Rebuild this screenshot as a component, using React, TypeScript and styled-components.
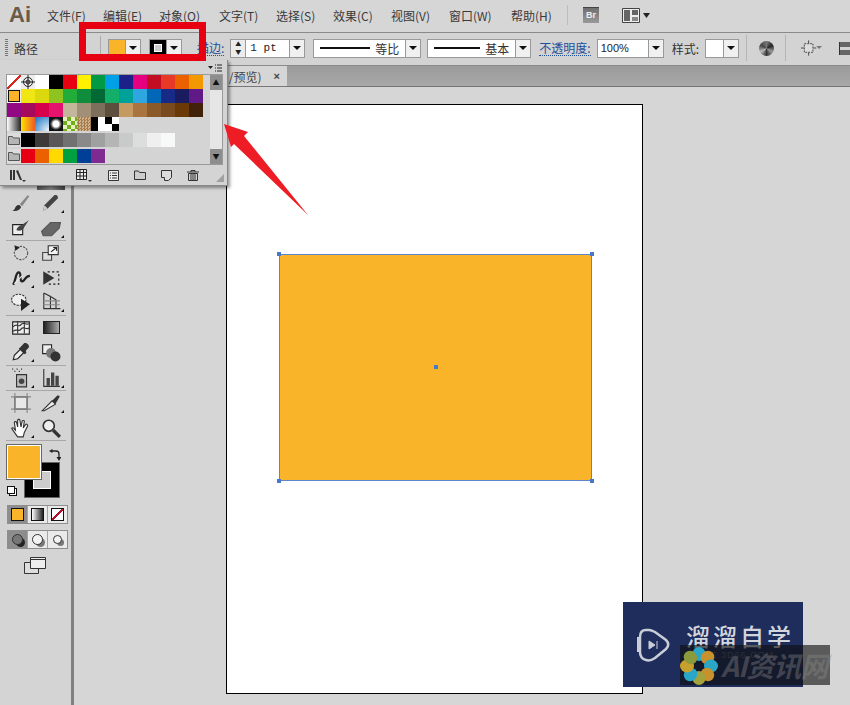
import React from 'react';
import styled, {createGlobalStyle} from 'styled-components';

const GlobalStyle = createGlobalStyle`
  html, body {
    margin: 0;
    padding: 0;
    background: #d6d6d6;
  }
  body {
    font-family: "Noto Sans CJK SC", "Liberation Sans", sans-serif;
    color: #3a3a3a;
    overflow: hidden;
  }
`;

const MENU_ITEMS = [
  {label: '文件(F)', width: 56},
  {label: '编辑(E)', width: 56},
  {label: '对象(O)', width: 60},
  {label: '文字(T)', width: 57},
  {label: '选择(S)', width: 57},
  {label: '效果(C)', width: 58},
  {label: '视图(V)', width: 58},
  {label: '窗口(W)', width: 62},
  {label: '帮助(H)', width: 42},
];

const ROW_ONE = ['#e60012', '#fff100', '#009944', '#00a0e9', '#1d2088', '#e4007f', '#c30d23', '#e83828', '#eb6100', '#f39800'];
const ROW_TWO = ['#f0e614', '#dcd80e', '#8fc31f', '#22ac38', '#0f8c3c', '#006934', '#13ae67', '#00a199', '#2ea7e0', '#0068b7', '#172a88', '#1b1c60', '#601986'];
const ROW_THREE = ['#920783', '#a40b5d', '#d7004a', '#e4146e', '#c4b69a', '#a18f78', '#7c6f5c', '#5d4e3e', '#c49a60', '#a9743f', '#8b5a2b', '#784a1e', '#6a3906', '#42210b'];
const ROW_FOUR = [
  'linear-gradient(90deg,#fff,#222)',
  'linear-gradient(90deg,#ffe100,#ee5a24)',
  'radial-gradient(circle at 100% 100%,#f4f8fc,#2a7fc8 90%)',
  'radial-gradient(circle,#fff 0 3px,#999 4px,#111 6px)',
  'repeating-conic-gradient(#74ad1c 0 25%,#e4f0c0 0 50%) 0 0/8px 8px',
  'repeating-conic-gradient(#a97c50 0 25%,#cdb48c 0 50%) 0 0/3px 3px',
  'linear-gradient(90deg,#000 0 50%,#fff 50%)',
  'repeating-conic-gradient(#fff 0 25%,#000 0 50%) 0 0/14px 14px',
];
const ROW_FIVE = ['#000000', '#3e3a39', '#595757', '#727171', '#898989', '#9fa0a0', '#b5b5b6', '#c9caca', '#dcdddd', '#efefef', '#f7f8f8'];
const ROW_SIX = ['#e60012', '#eb6100', '#ffd900', '#00a040', '#003f98', '#7f2a90'];

const PETALS = ['#2aa6c8', '#c8912c', '#2aa6c8', '#c8912c', '#a4a23c', '#2aa6c8', '#c8a02c', '#8a9a3c'];

const Folder = () => (
  <svg width="12" height="10" viewBox="0 0 12 10">
    <path d="M.5 9.500V1.500h4l1 1.500h6v6.500z" fill="#b5b5b5" stroke="#555" />
  </svg>
);

const TOOLS: {icon: React.ReactNode; corner?: boolean}[][] = [
  [
    {icon: <><path d="M1 16c3 0 2-4 5-5 2-1 3 1 3 2-1 2-4 4-8 3z" fill="#333" /><path d="M8 10l7-8 1.500 1L10 12z" fill="#888" /></>},
    {corner: true, icon: <><path d="M2 16l1-5 9-9c2-1 4 1 3 3l-9 9z" fill="#444" /><path d="M2 16l1-5 3 3z" fill="#ccc" /></>},
  ],
  [
    {icon: <><path d="M1.500 6h9v9h-9z" fill="#eee" stroke="#222" /><path d="M5 11c0-3 3-4 5-5l6-4-4 6c-1 3-4 4-7 3z" fill="#444" /></>},
    {corner: true, icon: <path d="M.5 12l8-8h9l-1 5-7 7H2z" fill="#666" stroke="#555" />},
  ],
  [
    {corner: true, icon: <><circle cx="9" cy="9" r="6" fill="none" stroke="#555" strokeDasharray="2 1" /><path d="M3 2l5 2-4 3z" fill="#222" /></>},
    {corner: true, icon: <><path d="M1.500 8.500h8v7h-8z" fill="#ddd" stroke="#444" /><path d="M6.500 2.500h9v8h-9z" fill="#f4f4f4" stroke="#333" /><path d="M9 8l5-4M11 4h3v3" fill="none" stroke="#222" /></>},
  ],
  [
    {corner: true, icon: <><path d="M2 15c3-6 2-11 5-11 3 0 0 8 3 8s2-5 7-5" fill="none" stroke="#222" strokeWidth="2" /><path d="M3 14l7-7" stroke="#eee" /></>},
    {icon: <><path d="M2 3l10 6-10 6z" fill="#333" /><path d="M6 3.500h10v11H6" fill="none" stroke="#222" strokeDasharray="2 2" /></>},
  ],
  [
    {corner: true, icon: <><ellipse cx="7" cy="7" rx="6.500" ry="5" fill="#eee" stroke="#333" strokeDasharray="2 1" /><path d="M9 6l8 5-8 6z" fill="#222" /></>},
    {corner: true, icon: <><path d="M2.500 1v14h15M2.500 1l6 3v11M8.500 4l5 3v8" fill="none" stroke="#333" /><path d="M2 8h15M2 11.500h15" stroke="#888" /></>},
  ],
  [
    {icon: <><path d="M1.500 3.500h15v11h-15z" fill="#eee" stroke="#222" /><path d="M2 8c3-4 5 1 7-2s5 1 7-1M2 12c3-3 5 1 7-2s5 1 7-1M6 3v11M12 3v11" fill="none" stroke="#333" /></>},
    {icon: <defs />},
  ],
  [
    {corner: true, icon: <><path d="M2 16l1-4 7-7 3 3-7 7z" fill="#eee" stroke="#222" /><path d="M9 4l3-3c2-1 5 2 4 4l-3 3 1 2-2 1-5-5z" fill="#333" /></>},
    {icon: <><path d="M1.500 2.500h8v8h-8z" fill="#eee" stroke="#222" /><circle cx="9" cy="10" r="4.500" fill="#777" /><circle cx="13" cy="13" r="4.500" fill="#333" /></>},
  ],
  [
    {corner: true, icon: <><path d="M5 6h9v11H5z" fill="#bbb" stroke="#333" /><circle cx="9.500" cy="12" r="2.500" fill="#444" /><path d="M1 1h2M5 1h2M9 1h2M3 3h2M7 3h2" stroke="#333" strokeDasharray="1 1" /></>},
    {corner: true, icon: <><path d="M2.500 1v15.500H17" fill="none" stroke="#333" /><path d="M5 9h3v7H5zM9 4h3v12H9zM13 7h3v9h-3z" fill="#444" /></>},
  ],
  [
    {icon: <><path d="M3.500 3.500h11v11h-11z" fill="#e8e8e8" stroke="#444" /><path d="M0 3.500h18M0 14.500h18M3.500 0v18M14.500 0v18" stroke="#888" /></>},
    {corner: true, icon: <><path d="M1 16l9-9 3 3-10 6z" fill="#eee" stroke="#333" /><path d="M10 7l5-5 2 1-4 7z" fill="#333" /></>},
  ],
  [
    {corner: true, icon: <path d="M6 17L1 10c-1-1 1-2 2 0l1 1-1-7c0-1 2-1 2 0l1 4V2c0-1 2-1 2 0l1 6 1-5c0-1 2-1 2 0l-1 6 2-3c1-1 2 0 2 1l-3 6-1 4z" fill="#fff" stroke="#333" />},
    {icon: <><circle cx="7" cy="7" r="5" fill="#eee" stroke="#333" strokeWidth="1.500" /><path d="M11 11l6 6" stroke="#333" strokeWidth="3" /></>},
  ],
];

const GROUP_ENDS = [1, 4, 6, 7, 9];

export default function App(): JSX.Element {
  return (
    <Page>
      <GlobalStyle />
      <MenuBar>
        <Logo>Ai</Logo>
        <MenuList>
          {MENU_ITEMS.map((item) => (
            <MenuItem key={item.label} $width={item.width}>{item.label}</MenuItem>
          ))}
        </MenuList>
        <MenuDivider />
        <BridgeBadge>Br</BridgeBadge>
        <svg width="28" height="15" viewBox="0 0 28 15">
          <path d="M.5.5h17v14H.5z" fill="#eee" stroke="#444" />
          <path d="M2 2h6v11H2zM10 2h6v5h-6z" fill="#666" />
          <path d="M10 9h6v4h-6z" fill="#888" />
          <path d="M21 5h7l-3.500 5z" fill="#222" />
        </svg>
      </MenuBar>

      <ControlBar>
        <Grip />
        <ControlLabel>路径</ControlLabel>
        <ControlDivider />
        <SwatchPicker>
          <SwatchFace $fill="#f9b42a" />
          <Caret />
        </SwatchPicker>
        <SwatchPicker>
          <StrokeFace />
          <Caret />
        </SwatchPicker>
        <LinkLabel $left={15}>描边:</LinkLabel>
        <Spinner>
          <SpinnerArrows><span>▲</span><span>▼</span></SpinnerArrows>
          <MonoValue>1 pt</MonoValue>
          <Caret />
        </Spinner>
        <LineSelect $width={108} $after={6}>
          <LineSample $width={50} />
          <LineName>等比</LineName>
          <Caret />
        </LineSelect>
        <LineSelect $width={104} $after={0}>
          <LineSample $width={46} />
          <LineName>基本</LineName>
          <Caret />
        </LineSelect>
        <LinkLabel $left={8}>不透明度:</LinkLabel>
        <PercentSelect>
          <PercentValue>100%</PercentValue>
          <Caret />
        </PercentSelect>
        <PlainLabel>样式:</PlainLabel>
        <StyleSelect>
          <StyleFace />
          <Caret />
        </StyleSelect>
        <ThinDivider $after={12} />
        <RecolorIcon />
        <ThinDivider $after={15} />
        <svg width="22" height="16" viewBox="0 0 22 16">
          <path d="M3.500 3.500h9v9h-9z" fill="#ddd" stroke="#444" strokeDasharray="2 1" />
          <path d="M8 0v3M8 13v3M0 8h3M13 8h3" stroke="#444" />
          <path d="M16 6h6l-3 3z" fill="#777" />
        </svg>
        <AlignIcon />
      </ControlBar>

      <Workspace>
        <ToolPanel>
          <ToolTop><ToolStub /></ToolTop>
          {TOOLS.map((row, index) => (
            <ToolRowGroup key={index} $divided={GROUP_ENDS.includes(index)}>
              {row.map((tool, toolIndex) => (
                <ToolButton key={toolIndex} $corner={tool.corner}>
                  {index === 5 && toolIndex === 1 ? (
                    <GradientTool />
                  ) : (
                    <svg width="20" height="20" viewBox="0 0 18 18">{tool.icon}</svg>
                  )}
                </ToolButton>
              ))}
            </ToolRowGroup>
          ))}
          <ColorWell>
            <StrokeWell><StrokeHole /></StrokeWell>
            <FillWell />
            <SwapIcon width="12" height="12" viewBox="0 0 12 12">
              <path d="M3 2h4c2 0 3 1 3 3v3" fill="none" stroke="#222" strokeWidth="1.300" />
              <path d="M0 2l3.500-2v4zM10 12L7.500 8h5z" fill="#222" />
            </SwapIcon>
            <DefaultIcon><i /><b /></DefaultIcon>
          </ColorWell>
          <ModeRow>
            <ModeButton $active><ModeFill /></ModeButton>
            <ModeButton><ModeGradient /></ModeButton>
            <ModeButton><ModeNone /></ModeButton>
          </ModeRow>
          <ModeRow>
            <ModeButton $active><DrawMode $dark /></ModeButton>
            <ModeButton><DrawMode /></ModeButton>
            <ModeButton><DrawMode $small /></ModeButton>
          </ModeRow>
          <ScreenMode width="22" height="17" viewBox="0 0 22 17">
            <path d="M.5 5.500h14v11H.5z" fill="#ddd" stroke="#333" />
            <path d="M6.500.5h15v11h-15z" fill="#eee" stroke="#333" />
            <path d="M6.500 2.500h15" stroke="#333" />
          </ScreenMode>
        </ToolPanel>

        <DocumentArea>
          <TabStrip>
            <DocTab>
              <span>/预览)</span>
              <TabClose>×</TabClose>
            </DocTab>
          </TabStrip>
          <Canvas>
            <Artboard>
              <OrangeRect>
                <Handle $x="left" $y="top" />
                <Handle $x="right" $y="top" />
                <Handle $x="left" $y="bottom" />
                <Handle $x="right" $y="bottom" />
                <CenterDot />
              </OrangeRect>
            </Artboard>
          </Canvas>
        </DocumentArea>
      </Workspace>

      <SwatchPanel>
        <PanelMenu>
          <svg width="14" height="8" viewBox="0 0 14 8">
            <path d="M0 2h5L2.500 5zM7 .5h1v1H7zM7 3.500h1v1H7zM7 6.500h1v1H7zM9 .5h5v1H9zM9 3.500h5v1H9zM9 6.500h5v1H9z" fill="#222" />
          </svg>
        </PanelMenu>
        <SwatchBody>
          <SwatchGrid>
            <SwatchRow>
              <NoneSwatch />
              <RegisterSwatch>
                <svg width="14" height="14" viewBox="0 0 14 14">
                  <circle cx="7" cy="7" r="4.500" fill="none" stroke="#222" />
                  <circle cx="7" cy="7" r="2" fill="none" stroke="#222" />
                  <path d="M7 0v14M0 7h14" stroke="#222" />
                </svg>
              </RegisterSwatch>
              <Swatch $bg="#fff" />
              <Swatch $bg="#000" />
              {ROW_ONE.map((c) => <Swatch key={c} $bg={c} />)}
            </SwatchRow>
            <SwatchRow>
              <SelectedSwatch><i /></SelectedSwatch>
              {ROW_TWO.map((c) => <Swatch key={c} $bg={c} />)}
            </SwatchRow>
            <SwatchRow>
              {ROW_THREE.map((c) => <Swatch key={c} $bg={c} />)}
            </SwatchRow>
            <SwatchRow>
              {ROW_FOUR.map((c) => <Swatch key={c} $bg={c} />)}
            </SwatchRow>
            <SwatchRow $gap>
              <FolderCell><Folder /></FolderCell>
              {ROW_FIVE.map((c) => <Swatch key={c} $bg={c} />)}
            </SwatchRow>
            <SwatchRow $gap>
              <FolderCell><Folder /></FolderCell>
              {ROW_SIX.map((c) => <Swatch key={c} $bg={c} />)}
            </SwatchRow>
          </SwatchGrid>
          <ScrollTrack>
            <ScrollButton>▲</ScrollButton>
            <ScrollThumb />
            <ScrollButton>▼</ScrollButton>
          </ScrollTrack>
        </SwatchBody>
        <PanelFooter>
          <svg width="17" height="13" viewBox="0 0 17 13">
            <path d="M1 1h2v10H1zM4 1h2v10H4zM7 2l2-1 4 10h-2z" fill="#333" />
            <path d="M13 11h4l-2 2z" fill="#333" />
          </svg>
          <FooterRight>
            <svg width="17" height="13" viewBox="0 0 17 13">
              <path d="M.5.5h10v10H.5zM.5 3.500h10M.5 7h10M4 .5v10M7.500.5v10" fill="#eee" stroke="#222" />
              <path d="M12 11h4l-2 2z" fill="#333" />
            </svg>
            <svg width="11" height="11" viewBox="0 0 11 11">
              <path d="M.5.5h10v10H.5z" fill="#eee" stroke="#333" />
              <path d="M2 3h1M4 3h5M2 5.500h1M4 5.500h5M2 8h1M4 8h5" stroke="#333" />
            </svg>
            <svg width="12" height="10" viewBox="0 0 12 10">
              <path d="M.5 9.500V1h4l1 1.500h6v7z" fill="#ccc" stroke="#333" />
            </svg>
            <svg width="11" height="11" viewBox="0 0 11 11">
              <path d="M.5.5h10v7l-3 3h-4v-3h-3z" fill="#ddd" stroke="#333" />
            </svg>
            <svg width="12" height="11" viewBox="0 0 12 11">
              <path d="M0 2h12M4 2V.5h4V2M1.500 3.500h9v7h-9zM4 4v6M6 4v6M8 4v6" fill="none" stroke="#333" />
            </svg>
          </FooterRight>
        </PanelFooter>
        <ResizeGrip />
      </SwatchPanel>

      <RedFrame />

      <ArrowMark width="90" height="100" viewBox="0 0 90 100">
        <path d="M2 4l24 8-4 4 64 79L12 24l-3 3z" fill="#ee1c25" />
      </ArrowMark>

      <Watermark>
        <svg width="36" height="38" viewBox="0 0 36 38">
          <path d="M9 4h3c2 0 4 1 6 2l11 8c3 3 3 6 0 9l-11 9c-3 2-6 3-9 2-4-1-6-4-6-8V11c0-4 2-7 6-7z M1 11v15" fill="none" stroke="#c9cdd8" strokeWidth="2.500" />
          <path d="M12 15l6 4-6 4zM20 15v8" fill="#c9cdd8" stroke="#c9cdd8" />
        </svg>
        <WatermarkText>
          <WatermarkTitle>溜溜自学</WatermarkTitle>
          <WatermarkUrl>ZIXUE.3D66.COM</WatermarkUrl>
        </WatermarkText>
      </Watermark>
      <AiStamp>
        <svg width="40" height="40" viewBox="0 0 40 40">
          <g transform="translate(19 21)">
            {PETALS.map((fill, i) => (
              <ellipse key={i} cx="0" cy="-12" rx="6.500" ry="7" fill={fill} transform={`rotate(${i * 45})`} />
            ))}
          </g>
        </svg>
        <StampText>AI资讯网</StampText>
      </AiStamp>
    </Page>
  );
}

const Page = styled.div`
  position: relative;
  width: 850px;
  height: 705px;
  overflow: hidden;
  background: #d6d6d6;
`;
const MenuBar = styled.header`
  display: flex;
  align-items: center;
  height: 32px;
  padding: 0 0 2px 9px;
  box-sizing: border-box;
`;
const Logo = styled.div`
  width: 38px;
  font-family: "Liberation Sans", sans-serif;
  font-size: 22px;
  font-weight: 700;
  color: #6b5a48;
`;
const MenuList = styled.nav`
  display: flex;
`;
const MenuItem = styled.span<{$width: number}>`
  width: ${({$width}) => $width}px;
  font-size: 12px;
  white-space: nowrap;
`;
const MenuDivider = styled.div`
  width: 1px;
  height: 20px;
  margin: 0 15px 0 14px;
  background: #bdbdbd;
`;
const BridgeBadge = styled.div`
  width: 16px;
  height: 15px;
  margin-right: 23px;
  border-top: 1px solid #444;
  background: linear-gradient(#6f6f6f, #9a9a9a);
  color: #eee;
  font: 700 9px/15px "Liberation Sans", sans-serif;
  text-align: center;
`;
const ControlBar = styled.div`
  display: flex;
  align-items: center;
  height: 34px;
  padding-bottom: 2px;
  box-sizing: border-box;
  border-top: 1px solid #8a8a8a;
  border-bottom: 1px solid #8a8a8a;
  background: #d3d3d3;
  white-space: nowrap;
  overflow: hidden;
`;
const Grip = styled.div`
  flex: none;
  width: 3px;
  height: 18px;
  margin: 0 6px 0 5px;
  background: repeating-linear-gradient(#777 0 1px, #d3d3d3 1px 2px);
`;
const ControlLabel = styled.span`
  flex: none;
  width: 86px;
  font-size: 12px;
`;
const ControlDivider = styled.div`
  flex: none;
  width: 1px;
  height: 24px;
  margin-right: 7px;
  background: #aaa;
`;
const SwatchPicker = styled.div`
  display: flex;
  flex: none;
  width: 33px;
  height: 18px;
  box-sizing: border-box;
  border: 1px solid #999;
  background: #eee;

  & + & {
    margin-left: 8px;
  }
`;
const SwatchFace = styled.div<{$fill: string}>`
  width: 17px;
  background: ${({$fill}) => $fill};
`;
const StrokeFace = styled.div`
  width: 17px;
  box-sizing: border-box;
  border: 4px solid #000;
  background: #ccc;
  box-shadow: inset 0 0 0 1px #fff;
`;
const Caret = styled.div`
  flex: none;
  position: relative;
  width: 14px;
  margin-left: auto;
  border-left: 1px solid #999;
  background: #f0f0f0;

  &::after {
    content: '';
    position: absolute;
    left: 3px;
    top: 50%;
    margin-top: -2px;
    border-style: solid;
    border-width: 4px 4px 0;
    border-color: #111 transparent transparent;
  }
`;
const LinkLabel = styled.span<{$left: number}>`
  flex: none;
  margin: 0 6px 0 ${({$left}) => $left}px;
  font-size: 12px;
  color: #1f4f9a;
  border-bottom: 1px dotted #1f4f9a;
  line-height: 14px;
`;
const Spinner = styled.div`
  display: flex;
  flex: none;
  width: 75px;
  height: 19px;
  margin-right: 8px;
  box-sizing: border-box;
  border: 1px solid #999;
  background: #fff;
`;
const SpinnerArrows = styled.div`
  display: flex;
  flex-direction: column;
  width: 14px;
  border-right: 1px solid #999;
  background: #ececec;
  font-size: 6px;
  line-height: 8px;
  text-align: center;
  color: #222;
`;
const MonoValue = styled.span`
  padding-left: 4px;
  font: 11px/16px "Liberation Mono", monospace;
  color: #222;
`;
const LineSelect = styled.div<{$width: number; $after: number}>`
  display: flex;
  flex: none;
  align-items: center;
  width: ${({$width}) => $width}px;
  height: 19px;
  margin-right: ${({$after}) => $after}px;
  padding-left: 6px;
  box-sizing: border-box;
  border: 1px solid #999;
  background: #fff;

  ${Caret} {
    align-self: stretch;
  }
`;
const LineSample = styled.div<{$width: number}>`
  width: ${({$width}) => $width}px;
  height: 2px;
  margin-right: 5px;
  background: #111;
`;
const LineName = styled.span`
  font-size: 12px;
  color: #333;
`;
const PercentSelect = styled.div`
  display: flex;
  flex: none;
  width: 67px;
  height: 19px;
  box-sizing: border-box;
  border: 1px solid #999;
  background: #fff;
`;
const PercentValue = styled.span`
  padding-left: 3px;
  font: 11px/16px "Liberation Sans", sans-serif;
  color: #222;
`;
const PlainLabel = styled.span`
  flex: none;
  margin: 0 6px 0 8px;
  font-size: 12px;
  color: #333;
`;
const StyleSelect = styled.div`
  display: flex;
  flex: none;
  width: 34px;
  height: 19px;
  box-sizing: border-box;
  border: 1px solid #999;
  background: #fff;
`;
const StyleFace = styled.div`
  width: 17px;
`;
const ThinDivider = styled.div<{$after: number}>`
  flex: none;
  width: 1px;
  height: 26px;
  margin: 0 ${({$after}) => $after}px 0 7px;
  background: #b5b5b5;
`;
const RecolorIcon = styled.div`
  flex: none;
  width: 15px;
  height: 15px;
  margin-right: 4px;
  border-radius: 50%;
  background: conic-gradient(#777, #222, #999, #333, #bbb, #444, #777);
`;
const AlignIcon = styled.div`
  flex: none;
  width: 10px;
  height: 13px;
  margin-left: 17px;
  border-left: 1px solid #333;
  background: linear-gradient(#666 0 5px, transparent 5px 8px, #666 8px);
`;
const Workspace = styled.div`
  display: flex;
  height: 639px;
`;
const ToolPanel = styled.aside`
  display: flex;
  flex-direction: column;
  align-items: flex-start;
  flex: none;
  width: 74px;
  box-sizing: border-box;
  border-right: 3px solid #808080;
  background: #d4d4d4;
`;
const ToolTop = styled.div`
  display: flex;
  align-items: flex-end;
  flex: none;
  height: 125px;
  padding: 0 0 1px 37px;
  box-sizing: border-box;
`;
const ToolStub = styled.div`
  width: 28px;
  height: 6px;
  background: linear-gradient(90deg, #555, #888, #444);
`;
const ToolRowGroup = styled.div<{$divided?: boolean}>`
  display: flex;
  align-items: flex-start;
  flex: none;
  box-sizing: border-box;
  width: 60px;
  height: ${({$divided}) => ($divided ? 25.5 : 24.5)}px;
  margin-left: 6px;
  border-bottom: ${({$divided}) => ($divided ? '1px solid #a8a8a8' : '0 none')};
`;
const ToolButton = styled.div<{$corner?: boolean}>`
  position: relative;
  display: flex;
  align-items: center;
  justify-content: center;
  width: 30px;
  height: 24px;

  &::after {
    content: '';
    display: ${({$corner}) => ($corner ? 'block' : 'none')};
    position: absolute;
    right: 2px;
    bottom: 2px;
    border-style: solid;
    border-width: 0 0 3px 3px;
    border-color: transparent transparent #111;
  }
`;
const GradientTool = styled.div`
  width: 15px;
  height: 11px;
  border: 1px solid #222;
  background: linear-gradient(90deg, #222, #aaa);
`;
const ColorWell = styled.div`
  position: relative;
  flex: none;
  width: 66px;
  height: 54px;
  margin: 3px 0 7px;
`;
const FillWell = styled.div`
  position: absolute;
  left: 6px;
  top: 0;
  width: 36px;
  height: 36px;
  box-sizing: border-box;
  border: 1px solid #666;
  outline: 1px solid #fff;
  outline-offset: -2px;
  background: #f9b42a;
`;
const StrokeWell = styled.div`
  position: absolute;
  left: 24px;
  top: 18px;
  width: 36px;
  height: 36px;
  box-sizing: border-box;
  padding: 8px;
  border: 1px solid #666;
  background: #000;
`;
const StrokeHole = styled.div`
  width: 18px;
  height: 18px;
  box-sizing: border-box;
  border: 1px solid #fff;
  background: #ccc;
`;
const SwapIcon = styled.svg`
  position: absolute;
  left: 49px;
  top: 5px;
`;
const DefaultIcon = styled.div`
  position: absolute;
  left: 7px;
  top: 42px;
  width: 10px;
  height: 10px;

  i, b {
    position: absolute;
    width: 6px;
    height: 6px;
    border: 1px solid #111;
  }
  b {
    right: 0;
    bottom: 0;
    background: #fff;
  }
  i {
    z-index: 1;
    left: 0;
    top: 0;
    background: #fff;
  }
`;
const ModeRow = styled.div`
  display: flex;
  flex: none;
  width: 61px;
  height: 19px;
  margin: 0 0 6px 7px;
  box-sizing: border-box;
  border: 1px solid #8e8e8e;
  background: #e4e4e4;
`;
const ModeButton = styled.div<{$active?: boolean}>`
  display: flex;
  align-items: center;
  justify-content: center;
  flex: 1;
  background: ${({$active}) => ($active ? '#8d8d8d' : '#eaeaea')};

  & + & {
    border-left: 1px solid #a5a5a5;
  }
`;
const ModeFill = styled.div`
  width: 13px;
  height: 13px;
  box-sizing: border-box;
  border: 1px solid #111;
  background: #f9b42a;
`;
const ModeGradient = styled.div`
  width: 13px;
  height: 13px;
  box-sizing: border-box;
  border: 1px solid #111;
  background: linear-gradient(90deg, #fff, #222);
`;
const ModeNone = styled.div`
  width: 13px;
  height: 13px;
  box-sizing: border-box;
  border: 1px solid #111;
  background: linear-gradient(135deg, #fff 0 42%, #b01030 42% 58%, #fff 58%);
`;
const DrawMode = styled.div<{$dark?: boolean; $small?: boolean}>`
  width: ${({$small}) => ($small ? 7 : 9)}px;
  height: ${({$small}) => ($small ? 7 : 9)}px;
  border: 1px solid #333;
  border-radius: 50%;
  background: ${({$dark}) => ($dark ? '#777' : '#f4f4f4')};
  box-shadow: 3px 3px 0 -1px ${({$dark}) => ($dark ? '#222' : '#777')};
`;
const ScreenMode = styled.svg`
  flex: none;
  margin: 2px 0 0 24px;
`;
const DocumentArea = styled.main`
  flex: 1;
  display: flex;
  flex-direction: column;
  min-width: 0;
`;
const TabStrip = styled.div`
  display: flex;
  flex: none;
  height: 21px;
  box-sizing: border-box;
  border-bottom: 1px solid #777;
  background: linear-gradient(#9b9b9b, #a8a8a8);
`;
const DocTab = styled.div`
  display: flex;
  align-items: center;
  justify-content: flex-end;
  gap: 12px;
  width: 213px;
  padding-right: 7px;
  box-sizing: border-box;
  background: #d6d6d6;
  font-size: 12px;
  color: #444;
`;
const TabClose = styled.span`
  font: 700 11px "Liberation Sans", sans-serif;
`;
const Canvas = styled.div`
  flex: 1;
  padding: 17px 0 0 152px;
  background: #d6d6d6;
`;
const Artboard = styled.section`
  position: relative;
  width: 417px;
  height: 590px;
  box-sizing: border-box;
  border: 1px solid #000;
  background: #fff;
`;
const OrangeRect = styled.div`
  position: absolute;
  left: 52px;
  top: 149px;
  width: 313px;
  height: 227px;
  box-sizing: border-box;
  border: 1px solid #5f86c8;
  background: #f9b42a;
`;
const Handle = styled.span<{$x: 'left' | 'right'; $y: 'top' | 'bottom'}>`
  position: absolute;
  ${({$x}) => $x}: -3px;
  ${({$y}) => $y}: -3px;
  width: 4px;
  height: 4px;
  background: #4a78c8;
`;
const CenterDot = styled.span`
  position: absolute;
  left: 154px;
  top: 110px;
  width: 4px;
  height: 4px;
  background: #4a78c8;
`;
const SwatchPanel = styled.div`
  position: absolute;
  left: 0;
  top: 60px;
  display: flex;
  flex-direction: column;
  width: 228px;
  height: 126px;
  padding: 0 4px 0 6px;
  box-sizing: border-box;
  border-right: 1px solid #8a8a8a;
  border-bottom: 1px solid #8a8a8a;
  background: #d4d4d4;
  box-shadow: 2px 2px 3px rgba(0, 0, 0, 0.4);
`;
const PanelMenu = styled.div`
  display: flex;
  justify-content: flex-end;
  height: 14px;
  padding: 4px 1px 0 0;
  box-sizing: border-box;
`;
const SwatchBody = styled.div`
  display: flex;
  justify-content: space-between;
  height: 91px;
  border: 1px solid #9a9a9a;
  box-sizing: border-box;
`;
const SwatchGrid = styled.div`
  display: flex;
  flex-direction: column;
`;
const SwatchRow = styled.div<{$gap?: boolean}>`
  display: flex;
  height: 14px;
  margin-top: ${({$gap}) => ($gap ? 2 : 0)}px;
`;
const Swatch = styled.div<{$bg: string}>`
  flex: none;
  width: 14px;
  height: 14px;
  background: ${({$bg}) => $bg};
`;
const NoneSwatch = styled.div`
  width: 14px;
  height: 14px;
  background: linear-gradient(135deg, #fff 0 44%, #d9261c 44% 56%, #fff 56%);
`;
const RegisterSwatch = styled.div`
  display: flex;
  width: 14px;
  height: 14px;
  background: #eee;
`;
const SelectedSwatch = styled.div`
  display: flex;
  align-items: center;
  justify-content: center;
  width: 14px;
  height: 14px;
  background: #eee;

  i {
    width: 10px;
    height: 10px;
    border: 1px solid #111;
    background: #f9b42a;
  }
`;
const FolderCell = styled.div`
  display: flex;
  align-items: center;
  justify-content: center;
  width: 14px;
  height: 14px;
  background: #dcdcdc;
`;
const ScrollTrack = styled.div`
  display: flex;
  flex-direction: column;
  justify-content: space-between;
  width: 12px;
  background: #e2e2e2;
`;
const ScrollButton = styled.div`
  height: 15px;
  background: #8e8e8e;
  color: #111;
  font-size: 7px;
  line-height: 15px;
  text-align: center;
`;
const ScrollThumb = styled.div`
  flex: 1;
  background: #e6e6e6;
`;
const PanelFooter = styled.div`
  display: flex;
  align-items: center;
  justify-content: space-between;
  flex: 1;
  padding: 0 24px 0 3px;
`;
const FooterRight = styled.div`
  display: flex;
  align-items: center;
  gap: 15px;
`;
const ResizeGrip = styled.div`
  position: absolute;
  right: 3px;
  bottom: 3px;
  width: 8px;
  height: 8px;
  background: radial-gradient(circle, #666 0 .6px, transparent .8px) 0 0/2px 2px;
  clip-path: polygon(100% 0, 100% 100%, 0 100%);
`;
const RedFrame = styled.div`
  position: absolute;
  left: 79px;
  top: 22px;
  width: 127px;
  height: 39px;
  box-sizing: border-box;
  border: 7px solid #e60012;
`;
const ArrowMark = styled.svg`
  position: absolute;
  left: 222px;
  top: 120px;
`;
const Watermark = styled.div`
  position: absolute;
  left: 623px;
  top: 602px;
  display: flex;
  align-items: flex-start;
  gap: 13px;
  width: 180px;
  height: 85px;
  padding: 24px 0 0 14px;
  box-sizing: border-box;
  background: #1f2d5c;
`;
const WatermarkText = styled.div`
  display: flex;
  flex-direction: column;
`;
const WatermarkTitle = styled.span`
  margin-top: -3px;
  font-size: 24px;
  font-weight: 500;
  line-height: 26px;
  color: #d2d5dc;
  letter-spacing: 3px;
  white-space: nowrap;
`;
const WatermarkUrl = styled.span`
  font: 9px/12px "Liberation Sans", sans-serif;
  color: #5d6270;
  letter-spacing: 1px;
  white-space: nowrap;
`;
const AiStamp = styled.div`
  position: absolute;
  left: 680px;
  top: 645px;
  display: flex;
  align-items: center;
  width: 150px;
  height: 40px;
  background: rgba(15, 15, 15, 0.62);
`;
const StampText = styled.span`
  margin-left: 1px;
  font: italic 700 28px/40px "Noto Sans CJK SC", sans-serif;
  color: rgba(140, 140, 140, 0.38);
  letter-spacing: -1px;
  white-space: nowrap;
`;
